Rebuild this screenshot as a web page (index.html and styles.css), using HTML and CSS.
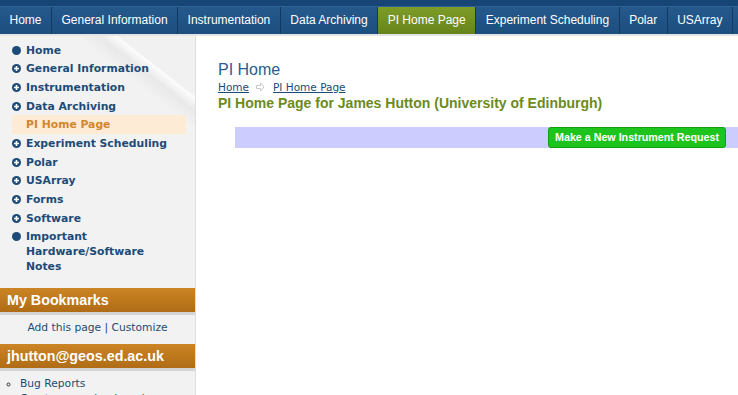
FILE: index.html
```html
<!DOCTYPE html>
<html lang="en">
<head>
    <meta charset="UTF-8">
    <meta name="viewport" content="width=device-width, initial-scale=1.0">
    <title>PI Home</title>
    <link rel="stylesheet" href="styles.css">
</head>
<body>
    <header class="topbar">
        <ul class="tabs">
            <li><a href="#">Home</a></li>
            <li><a href="#">General Information</a></li>
            <li><a href="#">Instrumentation</a></li>
            <li><a href="#">Data Archiving</a></li>
            <li class="active"><a href="#">PI Home Page</a></li>
            <li><a href="#">Experiment Scheduling</a></li>
            <li><a href="#">Polar</a></li>
            <li><a href="#">USArray</a></li>
            <li class="more"><a href="#"></a></li>
        </ul>
    </header>
    <div class="page">
        <aside class="sidebar">
            <ul class="side-nav">
                <li><svg class="ico" viewBox="0 0 9 9"><circle cx="4.5" cy="4.5" r="4.5"/></svg><a href="#">Home</a></li>
                <li><svg class="ico" viewBox="0 0 9 9"><circle cx="4.5" cy="4.5" r="4.5"/><path d="M4.5 2v5M2 4.5h5" stroke="#fff" stroke-width="1.6"/></svg><a href="#">General Information</a></li>
                <li><svg class="ico" viewBox="0 0 9 9"><circle cx="4.5" cy="4.5" r="4.5"/><path d="M4.5 2v5M2 4.5h5" stroke="#fff" stroke-width="1.6"/></svg><a href="#">Instrumentation</a></li>
                <li><svg class="ico" viewBox="0 0 9 9"><circle cx="4.5" cy="4.5" r="4.5"/><path d="M4.5 2v5M2 4.5h5" stroke="#fff" stroke-width="1.6"/></svg><a href="#">Data Archiving</a></li>
                <li class="current"><a href="#">PI Home Page</a></li>
                <li><svg class="ico" viewBox="0 0 9 9"><circle cx="4.5" cy="4.5" r="4.5"/><path d="M4.5 2v5M2 4.5h5" stroke="#fff" stroke-width="1.6"/></svg><a href="#">Experiment Scheduling</a></li>
                <li><svg class="ico" viewBox="0 0 9 9"><circle cx="4.5" cy="4.5" r="4.5"/><path d="M4.5 2v5M2 4.5h5" stroke="#fff" stroke-width="1.6"/></svg><a href="#">Polar</a></li>
                <li><svg class="ico" viewBox="0 0 9 9"><circle cx="4.5" cy="4.5" r="4.5"/><path d="M4.5 2v5M2 4.5h5" stroke="#fff" stroke-width="1.6"/></svg><a href="#">USArray</a></li>
                <li><svg class="ico" viewBox="0 0 9 9"><circle cx="4.5" cy="4.5" r="4.5"/><path d="M4.5 2v5M2 4.5h5" stroke="#fff" stroke-width="1.6"/></svg><a href="#">Forms</a></li>
                <li><svg class="ico" viewBox="0 0 9 9"><circle cx="4.5" cy="4.5" r="4.5"/><path d="M4.5 2v5M2 4.5h5" stroke="#fff" stroke-width="1.6"/></svg><a href="#">Software</a></li>
                <li><svg class="ico" viewBox="0 0 9 9"><circle cx="4.5" cy="4.5" r="4.5"/></svg><a href="#">Important Hardware/Software Notes</a></li>
            </ul>

            <h2 class="box-title">My Bookmarks</h2>
            <p class="box-links"><a href="#">Add this page</a> | <a href="#">Customize</a></p>

            <h2 class="box-title user">jhutton@geos.ed.ac.uk</h2>
            <ul class="user-links">
                <li><a href="#">Bug Reports</a></li>
                <li><a href="#">Create a new bookmark</a></li>
            </ul>
        </aside>

        <main class="content">
            <h1 class="page-title">PI Home</h1>
            <div class="crumbs">
                <a href="#">Home</a>
                <svg class="crumb-arrow" viewBox="0 0 10 10"><path d="M1.5 3.5h4v-2.5l3.5 4-3.5 4v-2.5h-4z" fill="none" stroke="#c8c8c8" stroke-width="1"/></svg>
                <a href="#">PI Home Page</a>
            </div>
            <h2 class="welcome">PI Home Page for James Hutton (University of Edinburgh)</h2>
            <div class="action-bar">
                <a class="btn-new" href="#">Make a New Instrument Request</a>
            </div>
        </main>
    </div>
</body>
</html>
```

FILE: styles.css
```css
:root {
    box-sizing: border-box;
}
*,
::before,
::after {
    box-sizing: inherit;
}
html,
body {
    height: 100%;
}
body {
    margin: 0;
    overflow: hidden;
    background-color: #fff;
    font-family: "DejaVu Sans", Verdana, sans-serif;
}

/* top tab bar */
.topbar {
    height: 36px;
    padding-top: 6px;
    overflow: hidden;
    background-color: #174676;
    border-bottom: 2px solid #e4e4e4;
}
.tabs {
    display: flex;
    margin: 0;
    padding: 0;
    list-style: none;
    white-space: nowrap;
    border-top: 1px solid #2f6396;
}
.tabs > li {
    flex: none;
    border-right: 1px solid #123a60;
    box-shadow: inset 1px 0 #3069a0;
}
.tabs > li:first-child {
    box-shadow: none;
}
.tabs > li > a {
    display: block;
    height: 27px;
    padding: 0 9.5px;
    line-height: 27px;
    background: linear-gradient(#25598c, #1c4e7f);
    color: #fff;
    font-family: "Liberation Sans", Arial, sans-serif;
    font-size: 12px;
    text-decoration: none;
}
.tabs > li.active > a {
    background: linear-gradient(#7e9c27, #67841b);
}
/* the next tab, cut off by the window */
.tabs > li.more {
    flex: 1;
}

/* layout */
.page {
    display: flex;
    height: calc(100% - 36px);
}
.sidebar {
    flex: 0 0 196px;
    border-right: 1px solid #dedede;
    background:
        linear-gradient(218deg, #f1f1f1 0, #f1f1f1 20%, #fcfcfc 20.6%, #e9e9e9 25%, #f2f2f2 31%, #f2f2f2 100%);
    background-size: 196px 150px;
    background-repeat: no-repeat;
    background-color: #f2f2f2;
}
.content {
    flex: 1;
    padding: 25px 0 0 22px;
}

/* side menu */
.side-nav {
    margin: 0;
    padding: 4.5px 9px 0 12px;
    list-style: none;
}
.side-nav > li {
    display: flex;
    align-items: flex-start;
    padding: 2px 0 1.7px;
    line-height: 15px;
    font-size: 10.8px;
    font-weight: bold;
}
.side-nav a {
    padding-right: 12px;
    color: #1d4b78;
    text-decoration: none;
}
.side-nav .ico {
    flex: none;
    width: 9px;
    height: 9px;
    margin: 3px 5px 0 0;
    fill: #1d4b78;
}
.side-nav > li.current {
    padding-left: 14px;
    background-color: #fdebd6;
}
.side-nav > li.current a {
    color: #d4862d;
}

/* boxes */
.box-title {
    margin: 11.5px 0 0;
    height: 27px;
    padding: 0 7px;
    line-height: 24px;
    border-bottom: 3px solid #d4d4d4;
    background: linear-gradient(#cc8524, #b06c16);
    color: #fff;
    font-family: "Liberation Sans", Arial, sans-serif;
    font-size: 14.3px;
    font-weight: bold;
}
.box-title.user {
    margin-top: 0;
}
.box-links {
    margin: 0;
    padding: 5px 0 9px;
    line-height: 15px;
    text-align: center;
    color: #1d4b78;
    font-size: 10.7px;
}
.box-links a,
.user-links a {
    color: #1d4b78;
    text-decoration: none;
}
.user-links {
    margin: 0;
    padding: 5px 0 0 20px;
    list-style: circle;
    line-height: 15px;
    font-size: 10.7px;
}
.user-links > li {
    color: #333;
}

/* main content */
.page-title {
    margin: 0;
    line-height: 18px;
    color: #2b5c8c;
    font-family: "Liberation Sans", Arial, sans-serif;
    font-size: 16px;
    font-weight: normal;
}
.crumbs {
    display: flex;
    align-items: center;
    height: 14px;
    margin-top: 1px;
    font-size: 10.5px;
}
.crumbs a {
    color: #1d4b78;
}
.crumb-arrow {
    width: 10px;
    height: 10px;
    margin: 0 8px 0 6px;
}
.welcome {
    margin: 1px 0 0;
    line-height: 16px;
    color: #6d8a20;
    font-family: "Liberation Sans", Arial, sans-serif;
    font-size: 14px;
    font-weight: bold;
}
.action-bar {
    display: flex;
    justify-content: flex-end;
    height: 21px;
    margin: 16px 0 0 17px;
    padding-right: 12px;
    background-color: #ccccff;
}
.btn-new {
    display: block;
    height: 21px;
    padding: 0 6px;
    line-height: 19px;
    border: 1px solid #10a010;
    border-radius: 3px;
    background-color: #1ec41e;
    color: #fff;
    font-family: "Liberation Sans", Arial, sans-serif;
    font-size: 10.7px;
    font-weight: bold;
    text-decoration: none;
}
```
